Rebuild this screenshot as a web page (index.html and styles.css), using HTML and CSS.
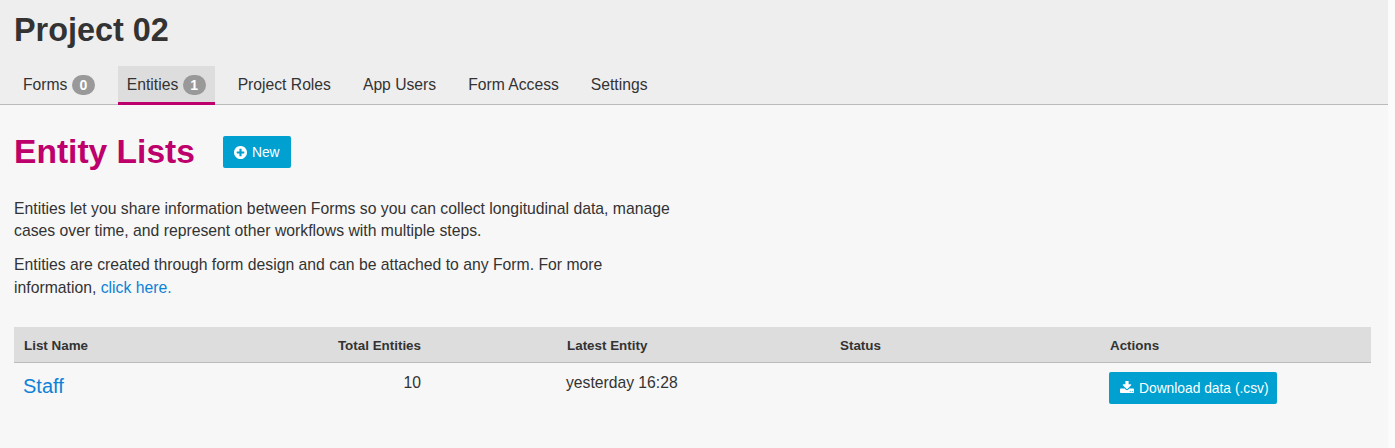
FILE: index.html
```
<!DOCTYPE html>
<html lang="en">
<head>
<meta charset="utf-8">
<title>Project 02</title>
<link rel="stylesheet" href="styles.css">
</head>
<body>
<header class="page-head">
  <h1 class="project-title">Project 02</h1>
  <nav class="tabs">
    <a class="tab">Forms <span class="badge">0</span></a>
    <a class="tab tab-active">Entities <span class="badge">1</span></a>
    <a class="tab">Project Roles</a>
    <a class="tab">App Users</a>
    <a class="tab">Form Access</a>
    <a class="tab">Settings</a>
  </nav>
</header>
<main class="content">
  <div class="section-head">
    <h2 class="section-title">Entity Lists</h2>
    <button class="btn btn-new">
      <svg class="icon-plus" viewBox="128 128 1536 1536"><path fill="#fff" d="M1344 960v-128q0-26-19-45t-45-19h-256v-256q0-26-19-45t-45-19h-128q-26 0-45 19t-19 45v256h-256q-26 0-45 19t-19 45v128q0 26 19 45t45 19h256v256q0 26 19 45t45 19h128q26 0 45-19t19-45v-256h256q26 0 45-19t19-45zm320-64q0 209-103 385.500t-279.500 279.500-385.500 103-385.500-103-279.500-279.500-103-385.500 103-385.500 279.500-279.500 385.500-103 385.500 103 279.500 279.500 103 385.500z"/></svg>
      New
    </button>
  </div>
  <div class="intro">
    <p>Entities let you share information between Forms so you can collect longitudinal data, manage cases over time, and represent other workflows with multiple steps.</p>
    <p>Entities are created through form design and can be attached to any Form. For more information, <a class="link">click here.</a></p>
  </div>
  <table class="lists">
    <thead>
      <tr>
        <th class="col-name">List Name</th>
        <th class="col-total">Total Entities</th>
        <th class="col-latest">Latest Entity</th>
        <th class="col-status">Status</th>
        <th class="col-actions">Actions</th>
      </tr>
    </thead>
    <tbody>
      <tr>
        <td class="cell-name"><a class="link">Staff</a></td>
        <td class="cell-total">10</td>
        <td class="cell-latest">yesterday 16:28</td>
        <td></td>
        <td class="cell-actions">
          <button class="btn btn-download">
            <svg class="icon-dl" viewBox="64 128 1664 1408"><path fill="#fff" d="M1344 1344q0-26-19-45t-45-19-45 19-19 45 19 45 45 19 45-19 19-45zm256 0q0-26-19-45t-45-19-45 19-19 45 19 45 45 19 45-19 19-45zm128-224v320q0 40-28 68t-68 28h-1472q-40 0-68-28t-28-68v-320q0-40 28-68t68-28h465l135 136q58 56 136 56t136-56l136-136h464q40 0 68 28t28 68zm-325-569q17 41-14 70l-448 448q-18 19-45 19t-45-19l-448-448q-31-29-14-70 17-39 59-39h256v-448q0-26 19-45t45-19h256q26 0 45 19t19 45v448h256q42 0 59 39z"/></svg>
            Download data (.csv)
          </button>
        </td>
      </tr>
    </tbody>
  </table>
</main>
</body>
</html>
```
FILE: styles.css
```
* { box-sizing: border-box; }
html { margin: 0; height: 100%; background: #fbfbfb; }
body {
  margin: 0;
  height: 100%;
  background: #f7f7f7;
  color: #333;
  font-family: "Liberation Sans", Arial, sans-serif;
  font-size: 14px;
  width: 1388px;
}
.page-head {
  background: #eee;
  border-bottom: 1px solid #bbb;
  height: 105px;
  padding: 10px 14px 0;
}
.project-title {
  font-size: 32.4px;
  font-weight: 700;
  line-height: 40px;
  margin: 0 0 16px;
  height: 40px;
}
.tabs { display: flex; gap: 14px; height: 39px; }
.tab {
  display: block;
  font-size: 15.7px;
  line-height: 20px;
  padding: 9px 9px 6px;
  height: 39px;
  white-space: nowrap;
}
.tab-active {
  background: #ddd;
  border-bottom: 3px solid #bd006b;
}
.badge {
  display: inline-block;
  background: #999;
  color: #fff;
  font-size: 14px;
  font-weight: 700;
  line-height: 16px;
  padding: 2px 7px;
  border-radius: 10px;
  min-width: 23px;
  text-align: center;
}
.content { padding: 31px 17px 0 14px; }
.section-head { display: flex; align-items: center; height: 32px; gap: 28px; }
.section-title {
  color: #bd006b;
  font-size: 33.6px;
  font-weight: 700;
  line-height: 32px;
  margin: 0;
}
.btn {
  background: #00a0d1;
  border: 0;
  border-radius: 2px;
  color: #fff;
  font-family: inherit;
  font-size: 13.8px;
  display: inline-flex;
  align-items: center;
  height: 32px;
  padding: 0 11px;
}
.btn-download { padding: 1px 8px 0 11px; }
.icon-plus { width: 13px; height: 13px; margin-right: 5px; }
.icon-dl { width: 14px; height: 12px; margin: -2px 5px 0 0; }
.intro { width: 660px; margin-top: 29.5px; font-size: 15.76px; line-height: 22.5px; }
.intro p { margin: 0 0 11.5px; }
.link { color: #0d82d6; }
.lists {
  border-collapse: separate;
  border-spacing: 0;
  table-layout: fixed;
  width: 1357px;
  margin-top: 27.5px;
}
.lists th {
  background: #ddd;
  border-bottom: 1px solid #bbb;
  font-size: 13.4px;
  font-weight: 700;
  height: 36px;
  padding: 2px 10px 0;
  text-align: left;
}
.lists td { font-size: 15.7px; padding: 0 10px; vertical-align: top; height: 50px; }
.col-name { width: 183px; }
.col-total { width: 360px; }
.col-latest { width: 273px; }
.col-status { width: 270px; }
.lists .col-total, .lists .cell-total { text-align: right; padding-right: 136px; }
.lists .cell-total, .lists .cell-latest { padding-top: 11px; }
.lists .cell-latest { padding-left: 9px; }
.lists .cell-name { padding-left: 9px; padding-top: 12px; font-size: 20px; }
.lists .cell-actions { padding-top: 9px; padding-left: 9px; }
```
